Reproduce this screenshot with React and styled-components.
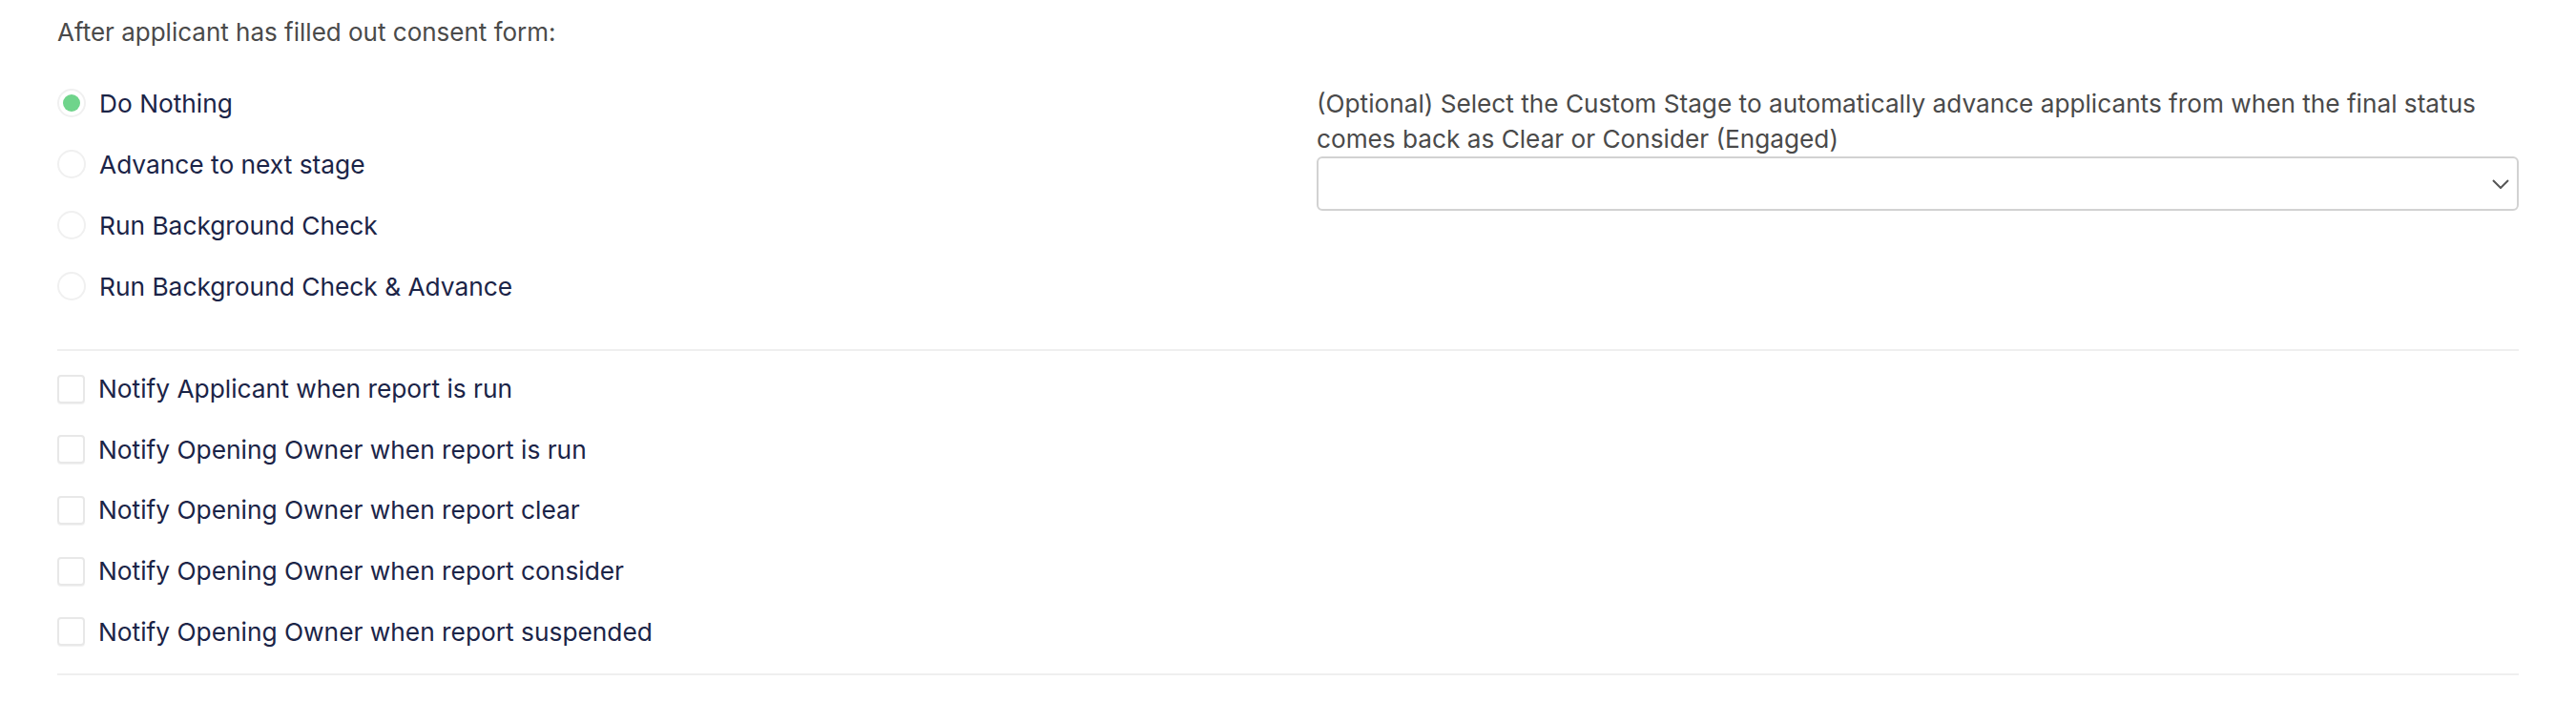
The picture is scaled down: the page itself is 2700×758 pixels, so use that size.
import styled, { createGlobalStyle } from 'styled-components'

const GlobalStyle = createGlobalStyle`
  body {
    margin: 0;
    background: #fff;
    font-family: 'Inter', 'Liberation Sans', sans-serif;
  }
`

const Page = styled.div`
  padding: 16px 60px 0 60px;
`

const Heading = styled.div`
  font-size: 26px;
  line-height: 36px;
  color: #4a4a4a;
`

const Columns = styled.div`
  display: grid;
  grid-template-columns: 1fr 1fr;
  column-gap: 60px;
  margin-top: 24px;
`

const OptionList = styled.div`
  display: flex;
  flex-direction: column;
`

const OptionRow = styled.label`
  display: flex;
  align-items: center;
  gap: 14px;
  height: ${(p) => p.h || 64}px;
  font-size: 26.3px;
  color: #1b2447;
`

const Radio = styled.span`
  width: 30px;
  height: 30px;
  box-sizing: border-box;
  border-radius: 50%;
  border: 2px solid #f0f0f0;
  display: flex;
  align-items: center;
  justify-content: center;

  &::after {
    content: '';
    width: 18px;
    height: 18px;
    border-radius: 50%;
    background: ${(p) => (p.checked ? '#6fd48b' : 'transparent')};
  }
`

const Checkbox = styled.span`
  width: 29px;
  height: 30px;
  box-sizing: border-box;
  border-radius: 4px;
  border: 2px solid #e8e8e8;
  box-shadow: 0 1px 1px rgba(0, 0, 0, 0.06);
`

const StageField = styled.div`
  padding-top: 14px;
`

const StageLabel = styled.div`
  font-size: 26.2px;
  line-height: 37px;
  color: #4a4a4a;
`

const Select = styled.div`
  height: 57px;
  box-sizing: border-box;
  border: 2px solid #d2d2d2;
  border-radius: 6px;
  display: flex;
  align-items: center;
  justify-content: flex-end;
  padding-right: 8px;
`

const Divider = styled.hr`
  border: 0;
  border-top: 2px solid #efefef;
  margin: ${(p) => p.m || '0'};
`

const radios = [
  'Do Nothing',
  'Advance to next stage',
  'Run Background Check',
  'Run Background Check & Advance',
]

const notifications = [
  'Notify Applicant when report is run',
  'Notify Opening Owner when report is run',
  'Notify Opening Owner when report clear',
  'Notify Opening Owner when report consider',
  'Notify Opening Owner when report suspended',
]

export default function App() {
  return (
    <>
      <GlobalStyle />
      <Page>
        <Heading>After applicant has filled out consent form:</Heading>
        <Columns>
          <OptionList>
            {radios.map((r, i) => (
              <OptionRow key={r}>
                <Radio checked={i === 0} />
                {r}
              </OptionRow>
            ))}
          </OptionList>
          <StageField>
            <StageLabel>
              (Optional) Select the Custom Stage to automatically advance applicants from when the
              final status comes back as Clear or Consider (Engaged)
            </StageLabel>
            <Select>
              <svg width="18" height="10" viewBox="0 0 18 10">
                <polyline points="1,1 9,9 17,1" fill="none" stroke="#555" strokeWidth="2" />
              </svg>
            </Select>
          </StageField>
        </Columns>
        <Divider m="34px 0 8px 0" />
        <OptionList>
          {notifications.map((n) => (
            <OptionRow key={n} h={63.6}>
              <Checkbox />
              {n}
            </OptionRow>
          ))}
        </OptionList>
        <Divider m="12px 0 0 0" />
      </Page>
    </>
  )
}
